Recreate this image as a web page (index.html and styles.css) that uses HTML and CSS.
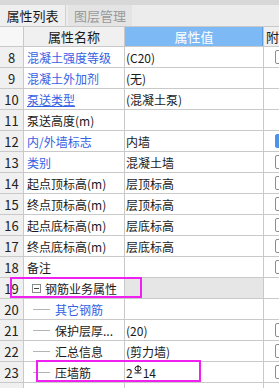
FILE: index.html
```html
<!DOCTYPE html>
<html lang="zh-CN">

<head>
    <meta charset="UTF-8">
    <meta name="viewport" content="width=device-width, initial-scale=1.0">
    <title>属性列表</title>
    <link rel="stylesheet" href="styles.css">
</head>

<body>
    <div class="panel">
        <div class="panel-top"></div>
        <div class="tabs">
            <div class="tab tab-active">属性列表</div>
            <div class="tab">图层管理</div>
        </div>

        <div class="grid-wrap">
            <div class="grid">
                <!-- header -->
                <div class="cell head-num"></div>
                <div class="cell head-name">属性名称</div>
                <div class="cell head-value">属性值</div>
                <div class="cell head-extra">附</div>

                <div class="cell num">8</div>
                <div class="cell name link">混凝土强度等级</div>
                <div class="cell value">(C20)</div>
                <div class="cell extra"><span class="check"></span></div>

                <div class="cell num">9</div>
                <div class="cell name link">混凝土外加剂</div>
                <div class="cell value">(无)</div>
                <div class="cell extra"></div>

                <div class="cell num">10</div>
                <div class="cell name link underline">泵送类型</div>
                <div class="cell value">(混凝土泵)</div>
                <div class="cell extra"></div>

                <div class="cell num">11</div>
                <div class="cell name">泵送高度(m)</div>
                <div class="cell value"></div>
                <div class="cell extra"></div>

                <div class="cell num">12</div>
                <div class="cell name link">内/外墙标志</div>
                <div class="cell value">内墙</div>
                <div class="cell extra"><span class="check checked"></span></div>

                <div class="cell num">13</div>
                <div class="cell name link">类别</div>
                <div class="cell value">混凝土墙</div>
                <div class="cell extra"><span class="check"></span></div>

                <div class="cell num">14</div>
                <div class="cell name">起点顶标高(m)</div>
                <div class="cell value">层顶标高</div>
                <div class="cell extra"><span class="check"></span></div>

                <div class="cell num">15</div>
                <div class="cell name">终点顶标高(m)</div>
                <div class="cell value">层顶标高</div>
                <div class="cell extra"><span class="check"></span></div>

                <div class="cell num">16</div>
                <div class="cell name">起点底标高(m)</div>
                <div class="cell value">层底标高</div>
                <div class="cell extra"><span class="check"></span></div>

                <div class="cell num">17</div>
                <div class="cell name">终点底标高(m)</div>
                <div class="cell value">层底标高</div>
                <div class="cell extra"><span class="check"></span></div>

                <div class="cell num">18</div>
                <div class="cell name">备注</div>
                <div class="cell value"></div>
                <div class="cell extra"><span class="check"></span></div>

                <div class="cell num">19</div>
                <div class="cell name group"><span class="toggle"></span>钢筋业务属性</div>
                <div class="cell value group-value"></div>
                <div class="cell extra"></div>

                <div class="cell num">20</div>
                <div class="cell name child link"><span class="branch"></span>其它钢筋</div>
                <div class="cell value"></div>
                <div class="cell extra"></div>

                <div class="cell num">21</div>
                <div class="cell name child"><span class="branch"></span>保护层厚...</div>
                <div class="cell value">(20)</div>
                <div class="cell extra"><span class="check"></span></div>

                <div class="cell num">22</div>
                <div class="cell name child"><span class="branch"></span>汇总信息</div>
                <div class="cell value">(剪力墙)</div>
                <div class="cell extra"><span class="check"></span></div>

                <div class="cell num">23</div>
                <div class="cell name child"><span class="branch"></span>压墙筋</div>
                <div class="cell value">2<svg class="bar-grade" width="8" height="9" viewBox="0 0 8 9">
                        <ellipse cx="4" cy="3.6" rx="3" ry="2.3" fill="none" stroke="#222" stroke-width="1" />
                        <line x1="4" y1="0" x2="4" y2="8" stroke="#222" stroke-width="1" />
                        <line x1="0.5" y1="8" x2="7.5" y2="8" stroke="#222" stroke-width="1" />
                    </svg>14</div>
                <div class="cell extra"><span class="check"></span></div>

                <div class="cell num"></div>
                <div class="cell name"></div>
                <div class="cell value"></div>
                <div class="cell extra"></div>
            </div>

            <!-- highlight marks drawn over the grid -->
            <div class="mark mark-group"></div>
            <div class="mark mark-row"></div>
        </div>
    </div>
</body>

</html>
```

FILE: styles.css
```css
html,
body {
    margin: 0;
    padding: 0;
    overflow: hidden;
    background: #ffffff;
}

.panel {
    width: 279px;
    overflow: hidden;
    font-family: "Noto Sans CJK SC", "Microsoft YaHei", sans-serif;
    font-size: 12px;
    color: #1a1a1a;
}

.panel-top {
    height: 5px;
    background: #d8d8d8;
}

.tabs {
    display: flex;
    height: 21px;
    background: #ececec;
}

.tab {
    width: 64px;
    display: flex;
    align-items: center;
    justify-content: center;
    font-size: 13px;
    color: #9a9a9a;
    background: #e4e4e4;
    margin-right: 2px;
}

.tab-active {
    width: 65px;
    color: #1a1a1a;
    background: #efefef;
    border-right: 1px solid #d0d0d0;
}

.grid-wrap {
    position: relative;
}

.grid {
    display: grid;
    grid-template-columns: 23px 100px 138px 15px;
    grid-template-rows: 19px;
    grid-auto-rows: 20px;
    gap: 1px;
    padding-top: 1px;
    background: #c9c9c9;
}

.cell {
    display: flex;
    align-items: center;
    background: #ffffff;
    white-space: nowrap;
    overflow: hidden;
}

.head-num {
    background: #f7f7f7;
}

.head-name {
    justify-content: center;
    background: #f0f0f0;
    font-size: 13px;
}

.head-value {
    justify-content: center;
    background: #7db9f4;
    color: #ffffff;
    font-size: 13px;
    box-shadow: inset -1px 0 0 #5c9ee6;
}

.head-extra {
    background: #f0f0f0;
    padding-left: 2px;
    font-size: 13px;
}

.num {
    justify-content: center;
    background: #f0f0f0;
    font-size: 13px;
    color: #222222;
}

.name {
    padding-left: 3px;
}

.value {
    padding-left: 1px;
}

.link {
    color: #3561e3;
}

.underline {
    text-decoration: underline;
}

.group {
    padding-left: 8px;
}

.group-value {
    background: #e6e6e6;
}

.toggle {
    position: relative;
    width: 7px;
    height: 7px;
    border: 1px solid #8a8a8a;
    margin-right: 4px;
}

.toggle::after {
    content: "";
    position: absolute;
    left: 1px;
    top: 3px;
    width: 5px;
    height: 1px;
    background: #444444;
}

.child {
    padding-left: 9px;
}

.branch {
    width: 17px;
    height: 1px;
    background: #b4b4b4;
    margin-right: 5px;
}

.bar-grade {
    margin: 0 1px 5px 1px;
}

.extra {
    padding-left: 11px;
}

.check {
    flex: none;
    width: 11px;
    height: 12px;
    border: 1px solid #8c8c8c;
    border-radius: 2px;
    background: #ffffff;
}

.check.checked {
    background: #4c93ea;
    border-color: #4c93ea;
}

.mark {
    position: absolute;
    border: 2px solid #f020f0;
}

.mark-group {
    left: 10px;
    top: 251px;
    width: 128px;
    height: 17px;
}

.mark-row {
    left: 36px;
    top: 334px;
    width: 161px;
    height: 18px;
}
```
